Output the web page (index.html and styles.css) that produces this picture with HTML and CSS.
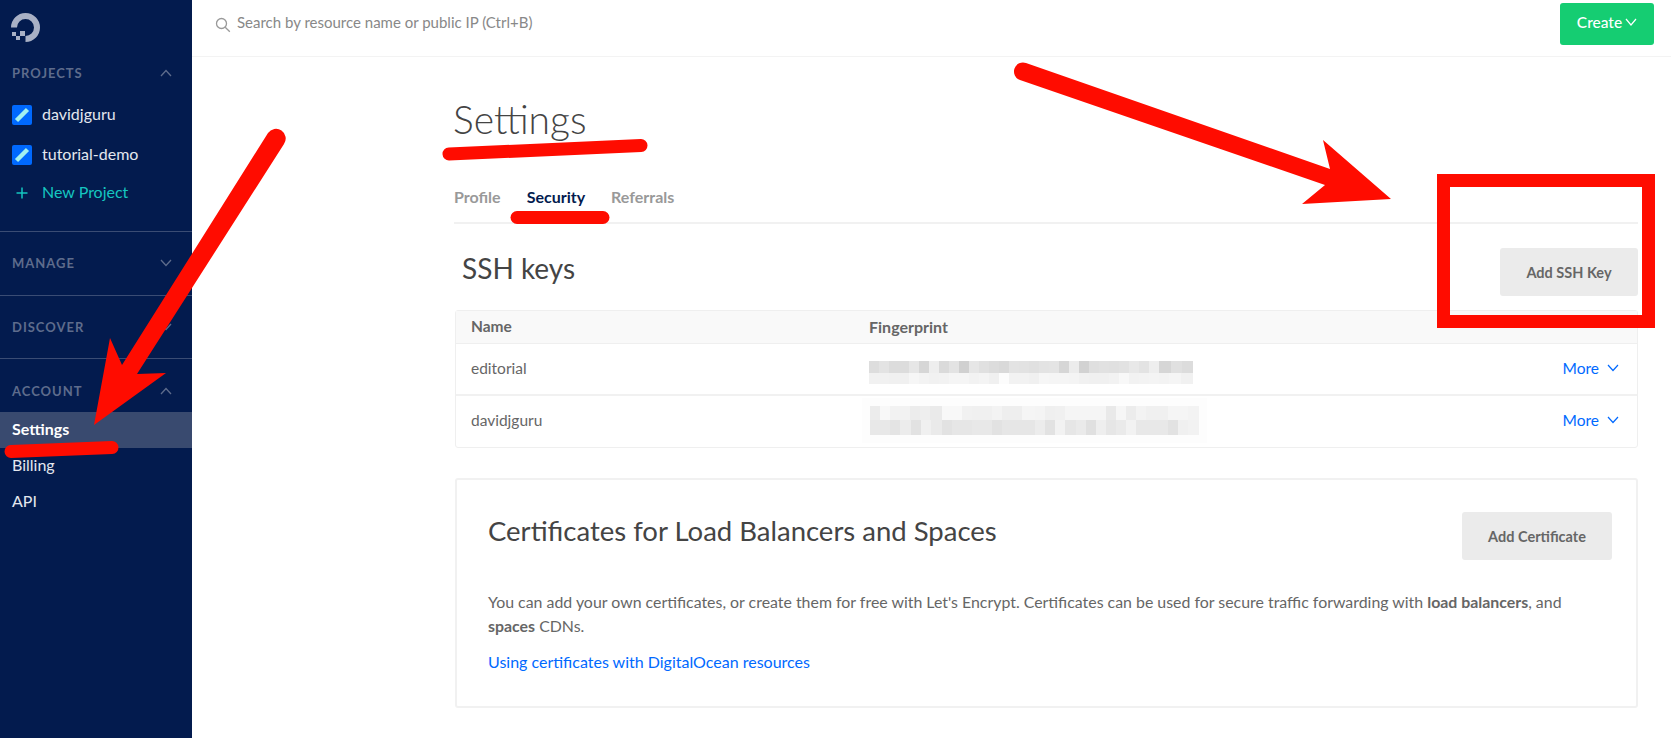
FILE: index.html
```html
<!DOCTYPE html>
<html lang="en">
<head>
  <meta charset="UTF-8">
  <title>Settings - Security</title>
  <link rel="stylesheet" href="styles.css">
</head>
<body>
  <aside class="sidebar">
    <div class="logo">
      <svg width="32" height="32" viewBox="0 0 32 32">
        <path d="M3 15.500 A11.500 11.500 0 1 1 14.500 27" fill="none" stroke="#a9b1c5" stroke-width="6"/>
        <rect x="9" y="19" width="5" height="5" fill="#a9b1c5"/>
        <rect x="5" y="24" width="4" height="4" fill="#a9b1c5"/>
        <rect x="1" y="20" width="4" height="4" fill="#a9b1c5"/>
      </svg>
    </div>

    <section class="nav-section projects">
      <div class="nav-head">PROJECTS
        <svg class="nav-chevron" width="12" height="8" viewBox="0 0 12 8"><path d="M1 7 L6 1.500 L11 7"/></svg>
      </div>
      <div class="project-list">
        <a class="project">
          <svg width="20" height="20" viewBox="0 0 20 20"><rect width="20" height="20" rx="2" fill="#0069ff"/><path d="M4.500 15.500 L15.500 4.500" stroke="#a3f1f0" stroke-width="4.500"/></svg>
          davidjguru
        </a>
        <a class="project">
          <svg width="20" height="20" viewBox="0 0 20 20"><rect width="20" height="20" rx="2" fill="#0069ff"/><path d="M4.500 15.500 L15.500 4.500" stroke="#a3f1f0" stroke-width="4.500"/></svg>
          tutorial-demo
        </a>
        <a class="project new-project">
          <svg width="20" height="20" viewBox="0 0 20 20"><path d="M10 4.500 V15.500 M4.500 10 H15.500" stroke="#15c6c0" stroke-width="1.500" fill="none"/></svg>
          New Project
        </a>
      </div>
    </section>

    <section class="nav-section collapsed">
      <div class="nav-head">MANAGE
        <svg class="nav-chevron" width="12" height="8" viewBox="0 0 12 8"><path d="M1 1 L6 6.500 L11 1"/></svg>
      </div>
    </section>
    <section class="nav-section collapsed">
      <div class="nav-head">DISCOVER
        <svg class="nav-chevron" width="12" height="8" viewBox="0 0 12 8"><path d="M1 1 L6 6.500 L11 1"/></svg>
      </div>
    </section>

    <section class="account">
      <div class="nav-head">ACCOUNT
        <svg class="nav-chevron" width="12" height="8" viewBox="0 0 12 8"><path d="M1 7 L6 1.500 L11 7"/></svg>
      </div>
      <a class="nav-link active">Settings</a>
      <a class="nav-link">Billing</a>
      <a class="nav-link">API</a>
    </section>
  </aside>

  <div class="main">
    <header class="topbar">
      <div class="search">
        <svg class="search-icon" width="16" height="16" viewBox="0 0 16 16"><circle cx="6.500" cy="6.500" r="5" fill="none" stroke="#999" stroke-width="1.300"/><path d="M10.200 10.200 L14.800 14.800" stroke="#999" stroke-width="1.300"/></svg>
        <span>Search by resource name or public IP (Ctrl+B)</span>
      </div>
      <button class="create">Create
        <svg width="12" height="8" viewBox="0 0 12 8"><path d="M1 1 L6 7 L11 1" fill="none" stroke="#fff" stroke-width="1.200"/></svg>
      </button>
    </header>

    <main class="content">
      <h1 class="page-title">Settings</h1>
      <nav class="tabs">
        <a class="tab">Profile</a>
        <a class="tab active">Security</a>
        <a class="tab">Referrals</a>
      </nav>

      <div class="ssh-head">
        <h2 class="ssh-title">SSH keys</h2>
        <button class="btn btn-ssh">Add SSH Key</button>
      </div>

      <div class="keys">
        <div class="keys-row keys-header">
          <div class="col-name">Name</div>
          <div class="col-print">Fingerprint</div>
        </div>
        <div class="keys-row">
          <div class="col-name">editorial</div>
          <div class="blur blur-one"><i class="blur-top"></i><i class="blur-bottom"></i></div>
          <a class="more">More <svg width="12" height="8" viewBox="0 0 12 8"><path d="M1 1 L6 6.500 L11 1" fill="none" stroke="#0069ff" stroke-width="1.200"/></svg></a>
        </div>
        <div class="keys-row">
          <div class="col-name">davidjguru</div>
          <div class="blur blur-two"><i class="blur-top"></i><i class="blur-bottom"></i></div>
          <a class="more">More <svg width="12" height="8" viewBox="0 0 12 8"><path d="M1 1 L6 6.500 L11 1" fill="none" stroke="#0069ff" stroke-width="1.200"/></svg></a>
        </div>
      </div>

      <section class="cert-card">
        <div class="cert-head">
          <h2 class="cert-title">Certificates for Load Balancers and Spaces</h2>
          <button class="btn btn-cert">Add Certificate</button>
        </div>
        <p class="cert-text">You can add your own certificates, or create them for free with Let's Encrypt. Certificates can be used for secure traffic forwarding with <b>load balancers</b>, and<br><b>spaces</b> CDNs.</p>
        <a class="cert-link">Using certificates with DigitalOcean resources</a>
      </section>
    </main>
  </div>

  <!-- hand drawn annotations on top of the screenshot -->
  <svg class="annotations" width="1671" height="738" viewBox="0 0 1671 738">
    <path d="M268 133 A9.700 9.700 0 0 1 284 144 L137 374 L166 373 L94 425 L110 338 L122 365 Z"/>
    <path d="M1026 63 L1330 169 L1323 140 L1391 199 L1302 204 L1325 185 L1020 80 A9 9 0 0 1 1026 63 Z"/>
    <path class="mark" d="M449 154 L641 145.500"/>
    <path class="mark" d="M517 217.500 L603 217.500"/>
    <path class="mark" d="M11 451.500 L112 447.500"/>
    <rect class="box" x="1443.500" y="180.500" width="205" height="141"/>
  </svg>
</body>
</html>
```

FILE: styles.css
```css
* {
  box-sizing: border-box;
}
body {
  margin: 0;
  height: 100vh;
  display: flex;
  overflow: hidden;
  position: relative;
  background: #fff;
  font-family: Lato, "Open Sans", sans-serif;
  font-size: 16px;
  color: #666;
}
a {
  text-decoration: none;
}
h1, h2, p {
  margin: 0;
  font-weight: 400;
}
button {
  font-family: inherit;
  border: 0;
  cursor: pointer;
}

/* sidebar */
.sidebar {
  width: 192px;
  flex: none;
  background: #031b4e;
  display: flex;
  flex-direction: column;
}
.logo {
  height: 63px;
  padding: 12px 0 0 11px;
}
.logo svg {
  display: block;
}
.nav-head {
  height: 20px;
  padding: 0 20px 0 12px;
  display: flex;
  align-items: center;
  justify-content: space-between;
  font-size: 13px;
  font-weight: 700;
  letter-spacing: 1px;
  color: #5e6c8c;
}
.nav-chevron {
  fill: none;
  stroke: #5e6c8c;
  stroke-width: 1.300;
}
.nav-section {
  border-bottom: 1px solid #3a4c74;
}
.projects {
  height: 169px;
}
.project-list {
  margin-top: 12px;
}
.project {
  height: 40px;
  padding: 0 0 4px 12px;
  display: flex;
  align-items: center;
  gap: 10px;
  color: #e4e7ee;
  font-size: 16px;
}
.project svg {
  margin-top: 4px;
}
.new-project {
  height: 36px;
  color: #15c6c0;
}
.collapsed {
  height: 64px;
  padding-bottom: 1px;
  display: flex;
  flex-direction: column;
  justify-content: center;
}
.collapsed + .collapsed {
  height: 63px;
  padding-bottom: 0;
}
.account {
  padding-top: 22px;
}
.account .nav-head {
  margin-bottom: 11px;
}
.nav-link {
  display: block;
  height: 36px;
  line-height: 34px;
  padding-left: 12px;
  color: #e4e7ee;
  font-size: 16px;
}
.nav-link.active {
  background: #394a6f;
  color: #fff;
  font-weight: 700;
}

/* top bar */
.main {
  flex: 1;
  min-width: 0;
  display: flex;
  flex-direction: column;
}
.topbar {
  height: 57px;
  flex: none;
  padding: 3px 17px 0 23px;
  display: flex;
  justify-content: space-between;
  align-items: flex-start;
  border-bottom: 1px solid #f3f3f3;
}
.search {
  height: 38px;
  display: flex;
  align-items: center;
  gap: 6px;
  color: #888;
  font-size: 15px;
}
.search-icon {
  margin-top: 6px;
}
.create {
  width: 94px;
  height: 42px;
  padding: 0 0 4px;
  background: #15cd72;
  border-radius: 3px;
  color: #fff;
  font-size: 15.500px;
  font-weight: 500;
  display: flex;
  align-items: center;
  justify-content: center;
  gap: 3px;
}

/* settings content */
.content {
  flex: 1;
  padding: 0 33px 0 263px;
}
.page-title {
  margin: 38px 0 0 -2px;
  font-size: 39px;
  line-height: 48px;
  font-weight: 300;
  color: #444;
}
.tabs {
  margin: 44px 0 0 -1px;
  padding-bottom: 15px;
  display: flex;
  gap: 26px;
  border-bottom: 2px solid #f1f1f1;
}
.tab {
  line-height: 20px;
  font-weight: 700;
  color: #999;
}
.tab.active {
  color: #031b4e;
}
.ssh-head {
  margin-top: 24px;
  display: flex;
  justify-content: space-between;
  align-items: flex-start;
}
.ssh-title {
  margin-left: 7px;
  font-size: 28px;
  line-height: 40px;
  color: #444;
}
.btn {
  height: 48px;
  background: #ebebeb;
  border-radius: 3px;
  color: #666;
  font-size: 14.500px;
  font-weight: 700;
}
.btn-ssh {
  width: 138px;
}
.btn-cert {
  width: 150px;
  flex: none;
}

/* ssh keys table */
.keys {
  margin-top: 14px;
  border: 1px solid #efefef;
  border-radius: 3px;
}
.keys-row {
  height: 52px;
  padding: 0 18px 0 15px;
  display: flex;
  align-items: center;
  border-bottom: 2px solid #f1f1f1;
}
.keys-row:last-child {
  border-bottom: 0;
  height: 51px;
}
.keys-row .col-name,
.keys-row .more {
  margin-bottom: 2px;
}
.keys-row:last-child .col-name,
.keys-row:last-child .more {
  margin-bottom: 4px;
}
.keys-header {
  height: 33px;
  background: #f9f9f9;
  border-bottom: 1px solid #efefef;
  font-weight: 700;
}
.col-name {
  width: 398px;
  flex: none;
  font-size: 15.500px;
}
.col-print {
  margin-bottom: 2px;
}
.blur i {
  display: block;
}
.blur-one {
  margin-top: 6px;
}
.blur-one .blur-top,
.blur-one .blur-bottom {
  width: 324px;
  height: 12px;
}
.blur-one .blur-top {
  background: linear-gradient(90deg, #ddd 0 10px, #e3e3e3 10px 20px, #dcdcdc 20px 40px, #e6e6e6 40px 50px, #d6d6d6 50px 60px, #eee 60px 70px, #dadada 70px 80px, #e3e3e3 80px 90px, #d0d0d0 90px 100px, #e6e6e6 100px 110px, #e0e0e0 110px 120px, #dcdcdc 120px 130px, #d9d9d9 130px 140px, #e3e3e3 140px 150px, #e2e2e2 150px 160px, #e0e0e0 160px 170px, #e3e3e3 170px 180px, #e4e4e4 180px 190px, #d6d6d6 190px 200px, #ececec 200px 210px, #d2d2d2 210px 220px, #dfdfdf 220px 230px, #e1e1e1 230px 240px, #e0e0e0 240px 250px, #e2e2e2 250px 260px, #e8e8e8 260px 270px, #e3e3e3 270px 280px, #eee 280px 290px, #d6d6d6 290px 302px, #e0e0e0 302px 313px, #dcdcdc 313px 324px);
}
.blur-one .blur-bottom {
  height: 11px;
  background: linear-gradient(90deg, #f1f1f1 0 20px, #f0f0f0 20px 40px, #f6f6f6 40px 50px, #f3f3f3 50px 60px, #f1f1f1 60px 70px, #f2f2f2 70px 80px, #f5f5f5 80px 100px, #f2f2f2 100px 110px, #f4f4f4 110px 120px, #f0f0f0 120px 130px, #fcfcfc 130px 140px, #f2f2f2 140px 160px, #f0f0f0 160px 170px, #f6f6f6 170px 180px, #f5f5f5 180px 200px, #f4f4f4 200px 210px, #f1f1f1 210px 220px, #f0f0f0 220px 240px, #f2f2f2 240px 250px, #f8f8f8 250px 260px, #f2f2f2 260px 270px, #f3f3f3 270px 280px, #f4f4f4 280px 290px, #f3f3f3 290px 300px, #f5f5f5 300px 312px, #f1f1f1 312px 324px);
}
.blur-two {
  margin: -3px 0 0 1px;
  box-shadow: 0 0 0 8px #fdfdfd;
}
.blur-two .blur-top,
.blur-two .blur-bottom {
  width: 329px;
  height: 14px;
}
.blur-two .blur-top {
  background: linear-gradient(90deg, #ececec 0 10px, #f8f8f8 10px 20px, #f2f2f2 20px 40px, #ececec 40px 50px, #eee 50px 60px, #eaeaea 60px 72px, #f8f8f8 72px 92px, #f1f1f1 92px 102px, #f0f0f0 102px 122px, #f3f3f3 122px 132px, #eee 132px 152px, #f5f5f5 152px 165px, #f4f4f4 165px 175px, #efefef 175px 185px, #f0f0f0 185px 195px, #f5f5f5 195px 236px, #e9e9e9 236px 246px, #f6f6f6 246px 256px, #ececec 256px 266px, #f3f3f3 266px 276px, #f0f0f0 276px 298px, #f5f5f5 298px 318px, #f3f3f3 318px 329px);
}
.blur-two .blur-bottom {
  height: 15px;
  background: linear-gradient(90deg, #e8e8e8 0 20px, #e4e4e4 20px 30px, #ececec 30px 41px, #e2e2e2 41px 51px, #f0f0f0 51px 61px, #eaeaea 61px 72px, #e2e2e2 72px 82px, #e6e6e6 82px 102px, #e8e8e8 102px 122px, #e2e2e2 122px 132px, #e6e6e6 132px 165px, #ececec 165px 175px, #e2e2e2 175px 185px, #f2f2f2 185px 195px, #e6e6e6 195px 206px, #eaeaea 206px 216px, #e0e0e0 216px 226px, #eee 226px 236px, #e6e6e6 236px 246px, #eaeaea 246px 256px, #f2f2f2 256px 266px, #e8e8e8 266px 298px, #e2e2e2 298px 308px, #f0f0f0 308px 318px, #f2f2f2 318px 329px);
}
.more {
  margin-left: auto;
  display: flex;
  align-items: center;
  gap: 8px;
  font-size: 15.500px;
  color: #0069ff;
}

/* certificates card */
.cert-card {
  margin-top: 30px;
  height: 230px;
  padding: 32px 24px 0 31px;
  border: 2px solid #f1f1f1;
  border-radius: 3px;
}
.cert-head {
  display: flex;
  justify-content: space-between;
  align-items: flex-start;
}
.cert-title {
  margin-top: -1px;
  font-size: 27.500px;
  line-height: 40px;
  color: #444;
}
.cert-text {
  margin-top: 30px;
  font-size: 15.900px;
  line-height: 24px;
}
.cert-text b {
  font-weight: 700;
}
.cert-link {
  display: block;
  margin-top: 12px;
  line-height: 24px;
  color: #0069ff;
}

/* red annotations */
.annotations {
  position: absolute;
  top: 0;
  left: 0;
  fill: #ff0c00;
  pointer-events: none;
}
.mark {
  fill: none;
  stroke: #ff0c00;
  stroke-width: 13;
  stroke-linecap: round;
}
.box {
  fill: none;
  stroke: #ff0c00;
  stroke-width: 13;
}
```
